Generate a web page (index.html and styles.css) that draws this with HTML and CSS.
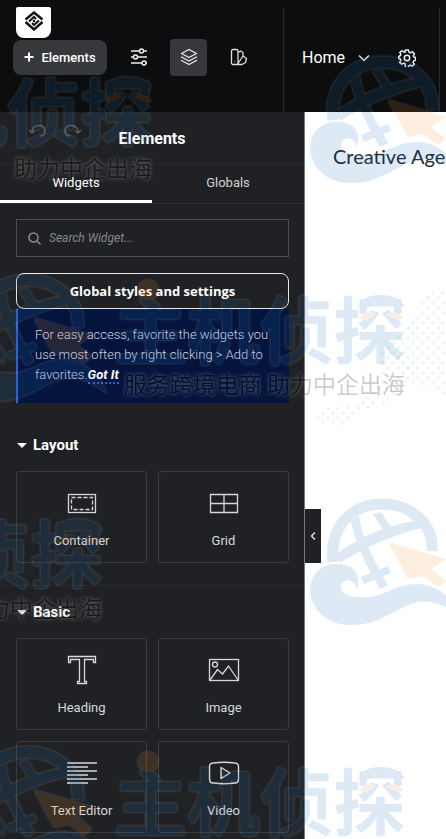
FILE: index.html
```
<!DOCTYPE html>
<html lang="en">
<head>
    <meta charset="UTF-8">
    <meta name="viewport" content="width=device-width, initial-scale=1.0">
    <title>Elements</title>
    <link rel="stylesheet" href="styles.css">
</head>
<body>
    <header class="topbar">
        <div class="topbar-tools">
            <a class="logo" href="#" aria-label="Home page">
                <svg width="20" height="20" viewBox="0 0 20 20" fill="none" stroke="#111" stroke-width="2.4">
                    <path d="M1.500 8.500L10 1.500L18.500 8.500M1.500 11L10 18.500L18.500 11"/>
                    <path d="M5 10.500L10 6L12 8M15 9.500L10 14L8 12" stroke-width="2"/>
                    <circle cx="10" cy="10" r="1.300" fill="#111" stroke="none"/>
                </svg>
            </a>
            <div class="tool-row">
                <button class="add-button" type="button">
                    <svg width="10" height="10" viewBox="0 0 10 10" stroke="#fff" stroke-width="2"><path d="M5 0.500v9M0.500 5h9"/></svg>
                    Elements
                </button>
                <button class="tool" type="button" aria-label="Site settings">
                    <svg width="18" height="18" viewBox="0 0 18 18" fill="none" stroke="#eee" stroke-width="1.500">
                        <path d="M1 3h8.500M13.500 3H17M1 9h2.500M7.500 9H17M1 15h11M16 15h1"/>
                        <circle cx="11.500" cy="3" r="2"/><circle cx="5.500" cy="9" r="2"/><circle cx="14" cy="15" r="2"/>
                    </svg>
                </button>
                <button class="tool active" type="button" aria-label="Structure">
                    <svg width="18" height="18" viewBox="0 0 18 18" fill="none" stroke="#eee" stroke-width="1.300" stroke-linejoin="round" stroke-linecap="round">
                        <path d="M9 1.500L16.500 5.500L9 9.500L1.500 5.500Z"/>
                        <path d="M1.500 9L9 13L16.500 9M1.500 12.500L9 16.500L16.500 12.500"/>
                    </svg>
                </button>
                <button class="tool" type="button" aria-label="Style guide">
                    <svg width="18" height="18" viewBox="0 0 18 18" fill="none" stroke="#ddd" stroke-width="1.300" stroke-linejoin="round">
                        <rect x="1.500" y="1.500" width="6.500" height="15" rx="1.500"/>
                        <path d="M8 4.500L10.500 3L13 4.500V8L8 15.500M13 8L16.500 10.500L15.500 14.500L12 16.500H7"/>
                        <path d="M4.500 13.500h.6"/>
                    </svg>
                </button>
            </div>
        </div>
        <div class="topbar-page">
            <button class="page-name" type="button">
                Home
                <svg width="12" height="8" viewBox="0 0 12 8" fill="none" stroke="#ddd" stroke-width="1.500"><path d="M1 1.500l5 5 5-5"/></svg>
            </button>
            <button class="icon-button" type="button" aria-label="Page settings">
                <svg width="18" height="18" viewBox="0 0 18 18" fill="none" stroke="#eee" stroke-width="1.500" stroke-linejoin="round">
                    <path d="M7.500 1h3l.5 2.200 1.500.7 2-1.200 2 2.200-1.200 1.900.5 1.200 1.700.5v2.800l-1.800.6-.6 1.400 1.200 1.900-2.100 2-1.900-1.100-1.300.6-.5 1.800h-3L7 14.700l-1.300-.6-2 1.100-2-2 1.100-1.900-.6-1.400L.8 9.500v-2l1.600-1 .5-1.200-1.100-1.800 2-1.800 1.900 1.100L7 3.200z"/>
                    <circle cx="9" cy="9" r="2.700"/>
                </svg>
            </button>
        </div>
    </header>

    <div class="workspace">
        <aside class="panel">
            <div class="panel-header">
                <div class="history">
                    <svg width="18" height="14" viewBox="0 0 18 14" fill="none" stroke="#5c5e62" stroke-width="1.500"><path d="M3 8C3 0 16 -1 16 7C16 10 14 12 11 12M0 6L3 9L6 7"/></svg>
                    <svg width="18" height="14" viewBox="0 0 18 14" fill="none" stroke="#5c5e62" stroke-width="1.500"><path d="M15 8C15 0 2 -1 2 7C2 10 4 12 7 12M18 6L15 9L12 7"/></svg>
                </div>
                <h1>Elements</h1>
            </div>
            <nav class="tabs">
                <button class="tab active" type="button">Widgets</button>
                <button class="tab" type="button">Globals</button>
            </nav>

            <div class="intro">
                <label class="search">
                    <svg width="13" height="13" viewBox="0 0 13 13" fill="none" stroke="#8b8d91" stroke-width="1.500"><circle cx="5.500" cy="5.500" r="4.500"/><path d="M9 9l3.500 3.500"/></svg>
                    <input type="text" placeholder="Search Widget..." aria-label="Search Widget">
                </label>
                <button class="global-button" type="button">Global styles and settings</button>
                <p class="notice">For easy access, favorite the widgets you use most often by right clicking &gt; Add to favorites.<a href="#">Got It</a></p>
            </div>

            <section class="category">
                <h2>Layout</h2>
                <div class="widgets">
                    <button class="widget" type="button">
                        <svg width="32" height="32" viewBox="0 0 32 32" fill="none" stroke="#d5d8dc" stroke-width="1.300">
                            <rect x="2.500" y="7.500" width="27" height="18"/>
                            <rect x="5.500" y="10.500" width="21" height="12" stroke-dasharray="4 2"/>
                        </svg>
                        Container
                    </button>
                    <button class="widget" type="button">
                        <svg width="32" height="32" viewBox="0 0 32 32" fill="none" stroke="#d5d8dc" stroke-width="1.300">
                            <path d="M2.500 7.500h27v18h-27zM16 7.500v18M2.500 16.500h27"/>
                        </svg>
                        Grid
                    </button>
                </div>
            </section>

            <section class="category">
                <h2>Basic</h2>
                <div class="widgets">
                    <button class="widget" type="button">
                        <svg width="32" height="32" viewBox="0 0 32 32" fill="none" stroke="#d5d8dc" stroke-width="1.300">
                            <path d="M2.500 2.500h27v6h-2V5.500h-9v22h2v2h-9v-2h2v-22h-9v3h-2z"/>
                        </svg>
                        Heading
                    </button>
                    <button class="widget" type="button">
                        <svg width="32" height="32" viewBox="0 0 32 32" fill="none" stroke="#d5d8dc" stroke-width="1.300">
                            <rect x="1.500" y="5.500" width="29" height="21"/>
                            <circle cx="7" cy="10.500" r="2.500"/>
                            <path d="M2 26l7.500-10.500 5 4.500 6-8L30 26"/>
                        </svg>
                        Image
                    </button>
                    <button class="widget" type="button">
                        <svg width="32" height="32" viewBox="0 0 32 32" fill="none" stroke="#d5d8dc" stroke-width="1.500">
                            <path d="M1 6h30M1 10h21M1 14h30M1 18h21M1 22h30M1 26h21"/>
                        </svg>
                        Text Editor
                    </button>
                    <button class="widget" type="button">
                        <svg width="32" height="32" viewBox="0 0 32 32" fill="none" stroke="#d5d8dc" stroke-width="1.400" stroke-linejoin="round">
                            <path d="M5 6Q16 4.500 27 6Q30.500 6 30.500 10V22Q30.500 26 27 26Q16 27.500 5 26Q1.500 26 1.500 22V10Q1.500 6 5 6Z"/>
                            <path d="M13 10.500v11l9-5.500z"/>
                        </svg>
                        Video
                    </button>
                </div>
            </section>
        </aside>

        <main class="preview">
            <p class="site-title">Creative Age</p>
            <button class="collapse" type="button" aria-label="Hide panel">
                <svg width="6" height="8" viewBox="0 0 6 8" fill="none" stroke="#ddd" stroke-width="1.500"><path d="M5 0.500L1.500 4L5 7.500"/></svg>
            </button>
        </main>
    </div>

    <!-- brand marks repeated over the whole screen -->
    <svg class="watermark" aria-hidden="true">
        <defs>
            <g id="globe" class="halo">
                <path fill="none" stroke="#1d70bd" stroke-width="11" d="M23 63C19 28 42 5 72 5C102 5 124 26 122 52"/>
                <path fill="#1d70bd" d="M41 22L49 17Q52 42 78 86L70 90Q45 48 41 22ZM63 15L71 13L86 36L79 40ZM26 55Q65 27 110 21L112 29Q69 39 30 64ZM51 78L78 67L81 74L54 85Z"/>
                <path fill="#1d70bd" d="M47 90C53 70 38 64 23 65C6 67-2 82 1 97C5 117 24 127 43 126C80 125 92 99 121 103Q139 107 151 119Q139 91 116 86C88 80 73 102 48 98C28 98 27 83 38 81Q45 82 47 90Z"/>
                <path fill="#ee8d2c" d="M78 43L136 60L121 70L136 82L128 88L113 77L98 80Z"/>
            </g>
            <g id="brand" class="halo">
                <text class="brand-name" x="158" y="83">主机侦探</text>
                <circle cx="192" cy="15" r="10" fill="#ee8d2c"/>
                <path fill="#1d70bd" d="M402 32Q407 20 424 20Q443 20 449 32Q425 24 402 32Z"/>
                <path fill="#ee8d2c" d="M403 44Q410 33 419 39Q412 47 403 44ZM430 39Q440 34 448 44Q438 46 430 39Z"/>
            </g>
            <pattern id="dots" width="10" height="10" patternUnits="userSpaceOnUse">
                <circle cx="3" cy="3" r="2" fill="#eff8f6"/><circle cx="8" cy="8" r="2" fill="#eff8f6"/>
            </pattern>
        </defs>
        <path fill="url(#dots)" d="M426 292L446 290V400L425 385H405L390 405L360 410L350 425H315V410L355 405L380 380V350L410 320Z"/>
        <g class="marks">
            <use href="#brand" x="-297" y="57"/>
            <use href="#globe" x="310" y="57"/>
            <use href="#globe" x="-44" y="275"/>
            <use href="#brand" x="-44" y="275"/>
            <use href="#brand" x="-347" y="499"/>
            <use href="#globe" x="310" y="499"/>
            <use href="#globe" x="-44" y="747"/>
            <use href="#brand" x="-44" y="747"/>
        </g>
        <g class="tagline">
            <text x="152" y="177">助力中企出海</text>
            <text x="405" y="393">服务跨境电商 助力中企出海</text>
            <text x="102" y="617">力中企出海</text>
        </g>
    </svg>
</body>
</html>
```
FILE: styles.css
```
* {
    box-sizing: border-box;
}
body {
    margin: 0;
    min-height: 100vh;
    display: flex;
    flex-direction: column;
    position: relative;
    overflow: hidden;
    font-family: Roboto, "Liberation Sans", sans-serif;
    background-color: #fff;
    color: #fff;
}
button {
    font-family: inherit;
    color: inherit;
    background: none;
    border: 0;
    padding: 0;
    cursor: pointer;
}
svg {
    display: block;
    flex-shrink: 0;
}

/* top bar */
.topbar {
    display: flex;
    height: 112px;
    padding-top: 7px;
    background-color: #0c0d0f;
}
.topbar-tools {
    width: 284px;
    flex-shrink: 0;
    border-right: 1px solid #292a2d;
}
.logo {
    display: flex;
    align-items: center;
    justify-content: center;
    width: 35px;
    height: 31px;
    margin-left: 16px;
    padding-bottom: 4px;
    background-color: #fff;
    border-radius: 2px 2px 8px 8px;
}
.tool-row {
    display: flex;
    align-items: center;
    gap: 13px;
    height: 38px;
    padding-left: 13px;
}
.add-button {
    display: flex;
    align-items: center;
    justify-content: center;
    gap: 7px;
    width: 94px;
    height: 35px;
    border-radius: 8px;
    background-color: #37383b;
    font-size: 13px;
    font-weight: 500;
}
.tool {
    display: flex;
    align-items: center;
    justify-content: center;
    width: 37px;
    height: 37px;
    border-radius: 4px;
}
.tool.active {
    background-color: #37383b;
}
.topbar-page {
    flex: 1;
    max-width: 156px;
    display: flex;
    justify-content: space-between;
    align-items: center;
    padding: 0 23px 4px 18px;
    border-right: 1px solid #292a2d;
}
.page-name {
    display: flex;
    align-items: center;
    gap: 13px;
    font-size: 16px;
}

/* widgets panel */
.workspace {
    flex: 1;
    display: flex;
}
.panel {
    width: 305px;
    flex-shrink: 0;
    background-color: #202124;
    border-right: 1px solid #77787b;
}
.panel-header {
    display: grid;
    grid-template-columns: 1fr auto 1fr;
    align-items: center;
    height: 53px;
    border-bottom: 1px solid #292a2d;
}
.panel-header h1 {
    margin: 0;
    font-size: 16px;
    font-weight: 700;
}
.history {
    display: flex;
    gap: 16px;
    padding: 0 0 14px 29px;
}
.tabs {
    display: flex;
    height: 39px;
    border-bottom: 1px solid #303134;
}
.tab {
    flex: 1;
    border-bottom: 3px solid transparent;
    font-size: 13px;
    color: #d0d1d4;
}
.tab.active {
    border-bottom-color: #fff;
    color: #fff;
}
.intro {
    padding: 15px 15px 0 16px;
}
.search {
    display: flex;
    align-items: center;
    gap: 8px;
    height: 38px;
    padding-left: 11px;
    border: 1px solid #4b4d51;
}
.search input {
    flex: 1;
    min-width: 0;
    padding: 0;
    border: 0;
    outline: 0;
    background: none;
    font: italic 12px Roboto, sans-serif;
    color: #fff;
}
.search input::placeholder {
    color: #85878b;
}
.global-button {
    width: 100%;
    height: 36px;
    margin-top: 16px;
    border: 1px solid #e6e6e6;
    border-radius: 8px;
    font-family: "Open Sans", sans-serif;
    font-size: 13px;
    font-weight: 700;
}
.notice {
    margin: 0;
    padding: 16px 10px 18px 17px;
    border-left: 2px solid #2861d5;
    background-color: #04143c;
    font-size: 13px;
    font-weight: 300;
    line-height: 20px;
    color: #d0d5e0;
}
.notice a {
    color: #fff;
    font-weight: 700;
    font-style: italic;
    text-decoration: none;
    border-bottom: 2px dotted #2861d5;
}
.category {
    padding: 16px 15px 22px 16px;
    border-bottom: 1px solid #2b2c2f;
}
.intro + .category {
    padding-top: 32px;
}
.category h2 {
    display: flex;
    align-items: center;
    gap: 6px;
    margin: 0 0 16px 1px;
    font-size: 15px;
    font-weight: 700;
    line-height: 20px;
}
.category h2::before {
    content: "";
    border: 5px solid transparent;
    border-top-color: #fff;
    border-bottom: 0;
}
.widgets {
    display: grid;
    grid-template-columns: 1fr 1fr;
    gap: 11px;
}
.widget {
    display: flex;
    flex-direction: column;
    align-items: center;
    gap: 14px;
    height: 92px;
    padding-top: 15px;
    border: 1px solid #3a3c40;
    border-radius: 3px;
    font-size: 13px;
    line-height: 16px;
    color: #d5d8dc;
}

/* page preview */
.preview {
    flex: 1;
    min-width: 0;
    position: relative;
    overflow: hidden;
}
.site-title {
    margin: 32px 0 0 28px;
    font-family: Lato, sans-serif;
    font-size: 20px;
    line-height: 24px;
    white-space: nowrap;
    color: #22262c;
}
.collapse {
    position: absolute;
    top: 397px;
    left: 0;
    display: flex;
    align-items: center;
    justify-content: center;
    width: 16px;
    height: 54px;
    background-color: #202124;
}

.watermark {
    position: absolute;
    top: 0;
    left: 0;
    width: 100%;
    height: 100%;
    pointer-events: none;
}
.marks {
    opacity: 0.15;
}
.halo {
    filter: drop-shadow(0 0 1px #fff) drop-shadow(0 0 1px #fff);
}
.brand-name {
    font-family: "Noto Sans CJK SC", sans-serif;
    font-size: 73px;
    font-weight: 700;
    fill: #1d70bd;
}
.tagline {
    font-family: "Noto Sans CJK SC", sans-serif;
    font-size: 23px;
    text-anchor: end;
    fill: #000;
    opacity: 0.2;
    filter: drop-shadow(0 0 1px #fff) drop-shadow(0 0 2px #fff);
}
```
